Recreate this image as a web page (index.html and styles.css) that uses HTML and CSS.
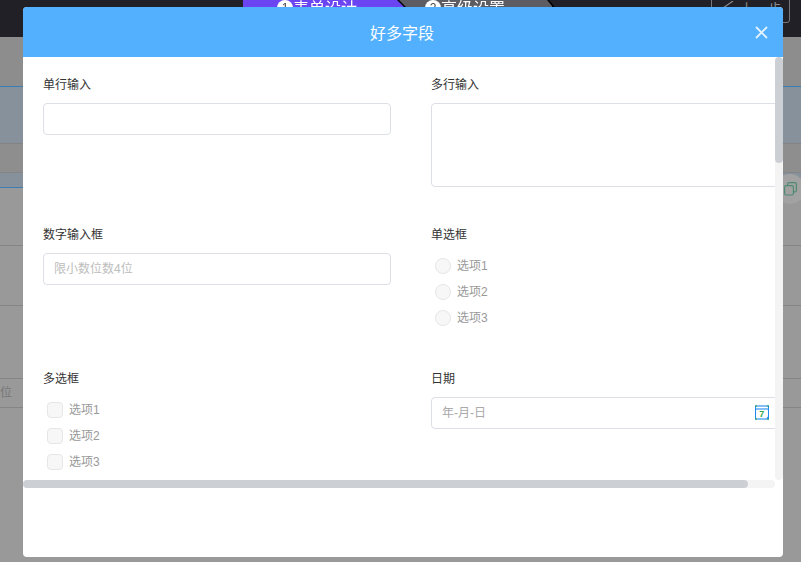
FILE: index.html
```html
<!DOCTYPE html>
<html lang="zh-CN">
<head>
<meta charset="utf-8">
<title>好多字段</title>
<link rel="stylesheet" href="styles.css">
</head>
<body>
<div class="app">
  <header class="topbar">
    <div class="step-wrap step-wrap-active">
      <div class="step step-active"><span class="step-num">1</span><span>表单设计</span></div>
    </div>
    <div class="step-wrap step-wrap-next">
      <div class="step step-next"><span class="step-num">2</span><span>高级设置</span></div>
    </div>
    <button class="prev-btn" type="button">
      <svg class="prev-icon" width="12" height="14" viewBox="0 0 12 14"><path d="M11 0 L1 7 L11 14" fill="none" stroke="#8a8a8a" stroke-width="1.2"/></svg>
      <span>上一步</span>
    </button>
  </header>
  <div class="rows">
    <div class="row row-a"></div>
    <div class="row row-b"></div>
    <div class="row row-c"></div>
    <div class="row row-d"></div>
    <div class="row row-e"></div>
    <div class="row row-f"></div>
    <div class="row row-g"></div>
    <div class="row row-h">位</div>
    <div class="row row-i"></div>
  </div>
</div>

<div class="float-btn">
  <svg width="13" height="14" viewBox="0 0 13 14"><rect x="0.6" y="3.6" width="8.8" height="9.4" rx="1.5" fill="none" stroke="#4f8b73" stroke-width="1.2"/><path d="M3.6 3.4 V2.1 A1.5 1.5 0 0 1 5.1 0.6 H10.9 A1.5 1.5 0 0 1 12.4 2.1 V8.4 A1.5 1.5 0 0 1 10.9 9.9 H9.6" fill="none" stroke="#4f8b73" stroke-width="1.2"/></svg>
</div>

<div class="modal">
  <div class="modal-head">
    <span class="modal-title">好多字段</span>
    <svg class="modal-close" width="13" height="13" viewBox="0 0 13 13"><path d="M1 1 L12 12 M12 1 L1 12" stroke="#e4f2ff" stroke-width="1.8" fill="none"/></svg>
  </div>
  <div class="modal-body">
    <div class="form">
      <div class="field">
        <label class="field-label">单行输入</label>
        <input class="control" type="text">
      </div>
      <div class="field">
        <label class="field-label">多行输入</label>
        <textarea class="control control-area"></textarea>
      </div>
      <div class="field">
        <label class="field-label">数字输入框</label>
        <input class="control control-number" type="text" placeholder="限小数位数4位">
      </div>
      <div class="field">
        <label class="field-label">单选框</label>
        <div class="opt"><span class="mark mark-radio"></span><span class="opt-text">选项1</span></div>
        <div class="opt"><span class="mark mark-radio"></span><span class="opt-text">选项2</span></div>
        <div class="opt"><span class="mark mark-radio"></span><span class="opt-text">选项3</span></div>
      </div>
      <div class="field">
        <label class="field-label">多选框</label>
        <div class="opt"><span class="mark mark-check"></span><span class="opt-text">选项1</span></div>
        <div class="opt"><span class="mark mark-check"></span><span class="opt-text">选项2</span></div>
        <div class="opt"><span class="mark mark-check"></span><span class="opt-text">选项3</span></div>
      </div>
      <div class="field">
        <label class="field-label">日期</label>
        <div class="date-wrap">
          <input class="control control-date" type="text" placeholder="年-月-日">
          <svg class="date-icon" width="14" height="15" viewBox="0 0 14 15">
            <rect x="0.5" y="1" width="13" height="13" fill="none" stroke="#1f8bf0" stroke-width="1.1"/>
            <path d="M0.5 4 H13.5" stroke="#1f8bf0" stroke-width="1.1"/>
            <path d="M0 1 H2 M12 1 H14 M0 14 H2 M12 14 H14" stroke="#2aa84a" stroke-width="1.2"/>
            <path d="M11 13.5 H13 V11.5 Z" fill="#1f8bf0"/>
            <text x="4.2" y="12.4" class="date-seven">7</text>
          </svg>
        </div>
      </div>
    </div>
  </div>
  <div class="scroll-v"><div class="scroll-v-thumb"></div></div>
  <div class="scroll-h"><div class="scroll-h-thumb"></div></div>
</div>
</body>
</html>
```

FILE: styles.css
```css
* { box-sizing: border-box; }

html, body {
  margin: 0;
  height: 100%;
  overflow: hidden;
}

body {
  background: #999;
  font-family: "Liberation Sans", "Noto Sans CJK SC", sans-serif;
  font-size: 12px;
  position: relative;
}

.topbar {
  height: 37px;
  background: #212026;
  display: flex;
  padding-left: 243px;
  overflow: hidden;
  position: relative;
}

.step-wrap { filter: drop-shadow(2px 0 0 #000); }
.step-wrap-active { position: relative; z-index: 1; }
.step-wrap-next { margin-left: -6px; }

.step {
  height: 37px;
  display: flex;
  font-size: 16px;
  line-height: 18px;
  color: #fff;
}

.step-active {
  width: 162px;
  padding-left: 34px;
  background: #6c45f2;
  clip-path: polygon(0 0, 154px 0, 162px 8px, 162px 37px, 0 37px);
}

.step-next {
  width: 153px;
  padding-left: 26px;
  background: #5d5c62;
  clip-path: polygon(0 0, 148px 0, 153px 6px, 153px 37px, 0 37px);
}

.step-num {
  width: 16px;
  height: 16px;
  border-radius: 50%;
  background: #fff;
  color: #444;
  font-size: 12px;
  line-height: 16px;
  text-align: center;
  flex: none;
}

.prev-btn {
  position: absolute;
  left: 711px;
  top: -12px;
  width: 79px;
  height: 35px;
  padding: 12px 0 0 10px;
  background: transparent;
  border: 1px solid #77767a;
  border-radius: 3px;
  color: #8a8a8a;
  font: inherit;
  font-size: 14px;
  line-height: 16px;
  display: flex;
  align-items: flex-start;
  gap: 6px;
}

.rows { display: flex; flex-direction: column; }
.row { flex: none; border-bottom: 1px solid #858585; }
.row-a { height: 50px; background: #8d8d8d; border-bottom-color: #3a7cb6; }
.row-b { height: 57px; background: #87919b; border-bottom-color: #838383; }
.row-c { height: 29px; background: #8e8e8e; border-bottom-color: #858585; }
.row-d { height: 15px; background: #87919b; border-bottom-color: #3a7cb6; }
.row-e { height: 58px; background: #999; }
.row-f { height: 60px; background: #999; }
.row-g { height: 73px; background: #999; }
.row-h { height: 29px; background: #999; line-height: 28px; color: #767676; font-size: 12px; }
.row-i { height: 100px; background: #999; border-bottom: 0; }

.float-btn {
  position: absolute;
  left: 775px;
  top: 174px;
  width: 30px;
  height: 30px;
  border-radius: 50%;
  background: #a2a2a2;
  display: flex;
  align-items: center;
  justify-content: center;
}

.modal {
  position: absolute;
  z-index: 10;
  left: 23px;
  top: 7px;
  width: 760px;
  height: 550px;
  background: #fff;
  border-radius: 4px;
  overflow: hidden;
}

.modal-head {
  height: 50px;
  background: #53b0ff;
  display: flex;
  align-items: center;
  justify-content: center;
  position: relative;
}

.modal-title {
  color: #fff;
  font-size: 16px;
  margin-right: 2px;
}

.modal-close {
  position: absolute;
  right: 15px;
  top: 19px;
}

.modal-body {
  height: 431px;
  overflow: hidden;
}

.scroll-v {
  position: absolute;
  left: 752px;
  top: 50px;
  width: 8px;
  height: 423px;
  background: #f4f4f5;
  border-radius: 4px;
}

.scroll-v-thumb {
  height: 106px;
  background: #ccd0d5;
  border-radius: 4px;
}

.scroll-h {
  position: absolute;
  left: 0;
  top: 473px;
  width: 752px;
  height: 8px;
  background: #f4f4f5;
  border-radius: 4px;
}

.scroll-h-thumb {
  width: 725px;
  height: 8px;
  background: #ccd0d5;
  border-radius: 4px;
}

.form {
  width: 780px;
  padding: 18px 24px 0 20px;
  display: grid;
  grid-template-columns: 348px 348px;
  column-gap: 40px;
  row-gap: 38px;
  align-items: start;
}

.field-label {
  display: block;
  height: 20px;
  line-height: 20px;
  margin-bottom: 8px;
  color: #333;
  font-size: 12px;
}

.control {
  display: block;
  width: 100%;
  height: 32px;
  padding: 0 10px;
  border: 1px solid #dcdfe6;
  border-radius: 4px;
  background: #fff;
  font: inherit;
  font-size: 12px;
  outline: none;
}

.control-area {
  height: 84px;
  resize: none;
}

.control-number::placeholder { color: #bdbdbd; }
.control-date::placeholder { color: #a9a9a9; }

.date-wrap { position: relative; }

.date-icon {
  position: absolute;
  left: 324px;
  top: 8px;
}

.date-seven {
  font-size: 9px;
  font-weight: bold;
  fill: #2aa84a;
}

.opt {
  height: 26px;
  display: flex;
  align-items: center;
  gap: 6px;
  padding-left: 4px;
  color: #999;
  font-size: 12px;
}

.opt-text { margin-top: -3px; }

.mark {
  width: 16px;
  height: 16px;
  border: 1px solid #e6e6e6;
  background: #f7f7f7;
  flex: none;
}

.mark-radio { border-radius: 50%; }
.mark-check { border-radius: 4px; }
```
